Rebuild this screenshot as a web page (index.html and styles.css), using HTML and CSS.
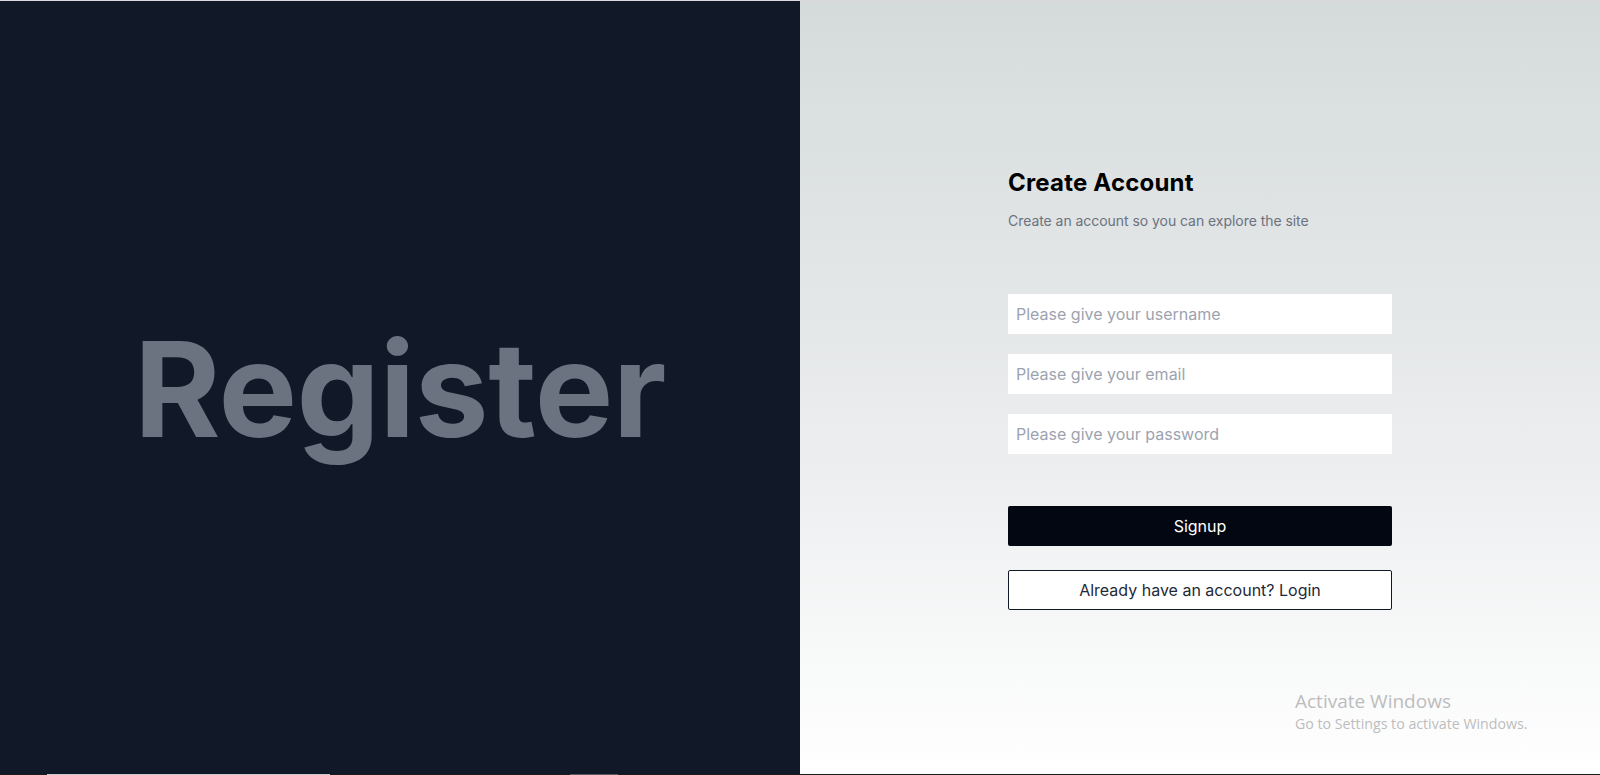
FILE: index.html
```html
<!DOCTYPE html>
<html lang="en">
<head>
<meta charset="utf-8">
<title>Register</title>
<link rel="stylesheet" href="styles.css">
</head>
<body>
<div class="top-edge"></div>
<main class="page">
  <section class="hero">
    <h1 class="hero-title">Register</h1>
  </section>
  <section class="panel">
    <form class="form">
      <h2 class="form-title">Create Account</h2>
      <p class="form-sub">Create an account so you can explore the site</p>
      <div class="fields">
        <input class="field" type="text" placeholder="Please give your username">
        <input class="field" type="email" placeholder="Please give your email">
        <input class="field" type="password" placeholder="Please give your password">
      </div>
      <button class="btn btn-primary" type="button">Signup</button>
      <button class="btn btn-outline" type="button">Already have an account? Login</button>
    </form>
    <div class="watermark">
      <div class="wm-title">Activate Windows</div>
      <div class="wm-sub">Go to Settings to activate Windows.</div>
    </div>
  </section>
</main>
<div class="bottom-edge">
  <span class="seg seg-a"></span>
  <span class="seg seg-b"></span>
</div>
</body>
</html>
```

FILE: styles.css
```css
* { box-sizing: border-box; }
html, body { margin: 0; padding: 0; }
body {
  width: 1600px;
  height: 775px;
  overflow: hidden;
  font-family: Inter, "Noto Sans", sans-serif;
  display: flex;
  flex-direction: column;
}
.top-edge {
  height: 1px;
  background: #dcd9e1;
  flex: none;
}
.bottom-edge {
  height: 1px;
  background: #1c1c1e;
  flex: none;
  display: flex;
}
.seg { display: block; height: 1px; }
.seg-a { margin-left: 47px; width: 283px; background: #c9c9cc; }
.seg-b { margin-left: 240px; width: 48px; background: #5a5a5e; }

.page {
  flex: 1;
  display: flex;
}
.hero {
  width: 800px;
  background: #111827;
  display: flex;
  align-items: center;
  justify-content: center;
}
.hero-title {
  margin: 0;
  font-size: 132px;
  line-height: 1;
  font-weight: 700;
  color: #6b7280;
  letter-spacing: -0.5px;
  padding-top: 2px;
}
.panel {
  position: relative;
  width: 800px;
  background: linear-gradient(to bottom, #d5dbdb 0%, #e8eaeb 50%, #ffffff 100%);
  display: flex;
  align-items: center;
  justify-content: center;
}
.form {
  width: 384px;
  display: flex;
  flex-direction: column;
}
.form-title {
  margin: 2px 0 0;
  font-size: 24px;
  line-height: 32px;
  font-weight: 700;
  color: #000;
  letter-spacing: 0.2px;
}
.form-sub {
  margin: 12px 0 0;
  font-size: 14px;
  line-height: 20px;
  color: #6b7280;
  letter-spacing: -0.05px;
}
.fields {
  margin-top: 63px;
  display: flex;
  flex-direction: column;
  gap: 20px;
}
.field {
  height: 40px;
  border: none;
  border-radius: 0;
  background: #fff;
  padding: 0 8px;
  font-family: inherit;
  font-size: 16px;
  color: #111827;
  outline: none;
}
.field::placeholder { color: #9ca3af; }
.btn {
  height: 40px;
  border-radius: 2px;
  font-family: inherit;
  font-size: 16px;
  cursor: pointer;
}
.btn-primary {
  margin-top: 52px;
  background: #030712;
  color: #fff;
  border: none;
  font-weight: 400;
}
.btn-outline {
  margin-top: 24px;
  background: #fff;
  color: #1f2937;
  border: 1px solid #111827;
}
.watermark {
  position: absolute;
  left: 495px;
  top: 689px;
  font-family: "Open Sans", "Noto Sans", sans-serif;
  color: #bdbdbd;
}
.wm-title { font-size: 19px; line-height: 23px; }
.wm-sub { font-size: 14.2px; line-height: 21px; }
```
